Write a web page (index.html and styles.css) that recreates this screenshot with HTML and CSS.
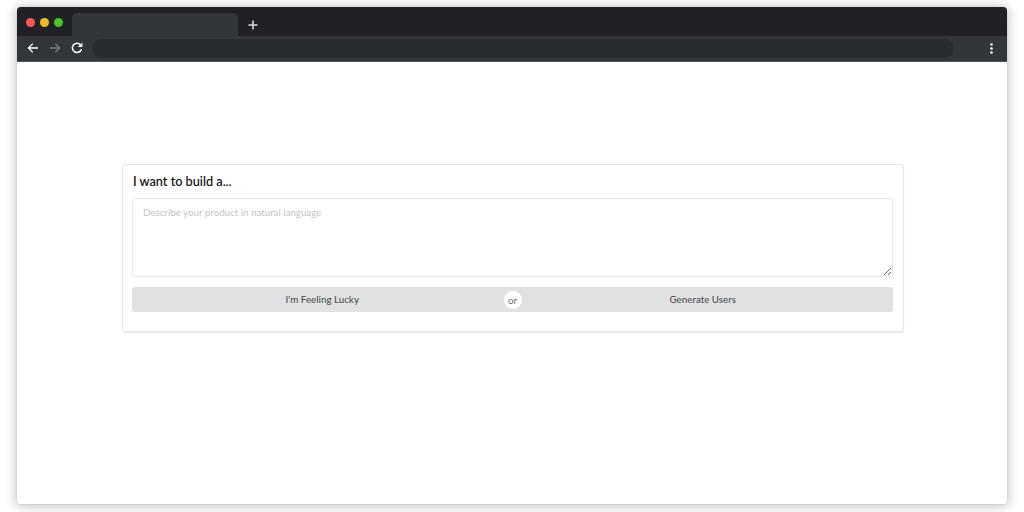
FILE: index.html
```html
<!DOCTYPE html>
<html lang="en">
<head>
<meta charset="utf-8">
<title>Generate Users</title>
<link rel="stylesheet" href="styles.css">
</head>
<body>
<div class="window">
  <div class="tabbar">
    <div class="lights">
      <span class="light red"></span>
      <span class="light yellow"></span>
      <span class="light green"></span>
    </div>
    <div class="tab"></div>
    <svg class="plus" width="10" height="10" viewBox="0 0 10 10"><path d="M5 .5v9M.5 5h9" stroke="#d8d9da" stroke-width="1.6" fill="none"/></svg>
  </div>
  <div class="toolbar">
    <svg class="nav" width="12" height="12" viewBox="0 0 12 12"><path d="M11 6H1.6M5.8 1.6 1.4 6l4.4 4.4" stroke="#fff" stroke-width="1.3" fill="none"/></svg>
    <svg class="nav" width="12" height="12" viewBox="0 0 12 12"><path d="M1 6h9.4M6.2 1.6 10.6 6l-4.4 4.4" stroke="#7b7e80" stroke-width="1.3" fill="none"/></svg>
    <svg class="nav" width="12" height="12" viewBox="0 0 12 12"><path d="M10.4 7.2A4.6 4.6 0 1 1 9.3 2.6" stroke="#fff" stroke-width="1.6" fill="none"/><path d="M11.4 .4v4.6H6.8z" fill="#fff"/></svg>
    <div class="omnibox"></div>
    <svg class="menu" width="3" height="11" viewBox="0 0 3 11"><circle cx="1.5" cy="1.5" r="1.3" fill="#fff"/><circle cx="1.5" cy="5.5" r="1.3" fill="#fff"/><circle cx="1.5" cy="9.5" r="1.3" fill="#fff"/></svg>
  </div>
  <main class="page">
    <section class="card">
      <h1 class="title">I want to build a...</h1>
      <textarea class="prompt" placeholder="Describe your product in natural language"></textarea>
      <div class="buttons">
        <button class="btn" type="button">I'm Feeling Lucky</button>
        <span class="or">or</span>
        <button class="btn" type="button">Generate Users</button>
      </div>
    </section>
  </main>
</div>
</body>
</html>
```
FILE: styles.css
```css
* { box-sizing: border-box; }
html, body { height: 100%; }
body {
  margin: 0;
  padding: 7px 17px 8px;
  background: #fff;
  font-family: Lato, "Liberation Sans", sans-serif;
  overflow: hidden;
}
.window {
  height: 100%;
  display: flex;
  flex-direction: column;
  background: #fff;
  border-radius: 4px;
  overflow: hidden;
  box-shadow: 0 0 1px rgba(0,0,0,.3), 0 1px 11px 1px rgba(0,0,0,.26);
}
.tabbar {
  height: 29px;
  flex: none;
  display: flex;
  align-items: flex-end;
  background: #202124;
}
.lights {
  display: flex;
  gap: 5px;
  align-self: flex-start;
  padding: 11px 0 0 9px;
  width: 55px;
}
.light { width: 9px; height: 9px; border-radius: 50%; }
.red { background: #fc5753; }
.yellow { background: #edbb25; }
.green { background: #47c52f; }
.tab {
  width: 166px;
  height: 23px;
  background: #323639;
  border-radius: 5px 5px 0 0;
}
.plus { margin: 0 0 6px 10px; }
.toolbar {
  height: 26px;
  flex: none;
  display: flex;
  align-items: center;
  padding: 0 11px 1px 10px;
  background: #323639;
  border-bottom: 1px solid #55585a;
}
.nav { margin-right: 10px; }
.omnibox {
  flex: 1;
  height: 19px;
  margin: 0 36px 0 -1px;
  border-radius: 10px;
  background: #292c2f;
}
.menu { margin-right: 3.5px; }
.page {
  flex: 1;
  padding: 102px 103px 0 105px;
  background: #fff;
}
.card {
  width: 782px;
  height: 168px;
  padding: 8px 10px 0 9px;
  border: 1px solid #e3e4e5;
  border-radius: 3px;
  box-shadow: 0 1px 1px rgba(34,36,38,.08);
}
.title {
  margin: 0 0 9px 1px;
  font-size: 12.7px;
  font-weight: 500;
  line-height: 16px;
  color: #111;
  -webkit-text-stroke: .1px #111;
}
.prompt {
  display: block;
  width: 100%;
  height: 79px;
  padding: 6px 9px 8px 10px;
  border: 1px solid #e5e6e7;
  border-radius: 3px;
  font: 9.75px/14px Lato, "Liberation Sans", sans-serif;
  resize: vertical;
  outline: none;
}
.prompt::placeholder { color: #c4c4c4; opacity: 1; }
.buttons {
  position: relative;
  display: flex;
  height: 25px;
  margin-top: 10px;
  background: #e0e1e2;
  border-radius: 3px;
}
.btn {
  flex: 1;
  padding: 0;
  border: 0;
  background: transparent;
  color: #505050;
  font: 500 9.75px/25px Lato, "Liberation Sans", sans-serif;
}
.or {
  position: absolute;
  left: 50%;
  top: 50%;
  width: 18px;
  height: 18px;
  margin: -9px 0 0 -9px;
  border-radius: 50%;
  background: #fff;
  color: #6f6f6f;
  font-size: 9.75px;
  line-height: 18px;
  text-align: center;
}
```
